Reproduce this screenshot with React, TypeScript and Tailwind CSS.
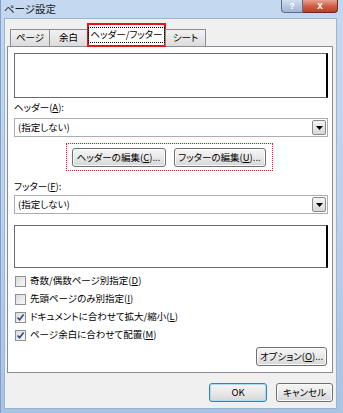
import React from 'react';

const FONT = "font-['Meiryo_UI','Noto_Sans_CJK_JP',sans-serif] [font-feature-settings:'palt']";
const TXT = 'whitespace-nowrap text-[9.5px] leading-none text-black';

const Key: React.FC<{ k: string }> = ({ k }) => (
    <>(<span className="underline underline-offset-1">{k}</span>)</>
);

const WinButton: React.FC<{ width: string; primary?: boolean; children: React.ReactNode }> = ({ width, primary, children }) => (
    <div
        className={`${width} h-[19px] flex items-center justify-center rounded-[3px] border bg-gradient-to-b from-[#f6f6f6] via-[#e9e9e9] to-[#d6d6d6] ${
            primary ? 'border-[#3c7fb1] shadow-[inset_0_0_0_1px_#a9dcf6]' : 'border-[#707070] shadow-[inset_0_0_0_1px_#fbfbfb]'
        }`}
    >
        <span className={TXT}>{children}</span>
    </div>
);

const SelectBox: React.FC<{ value: string }> = ({ value }) => (
    <div className="h-[19px] flex items-center justify-between border border-[#abadb3] bg-white pl-[3px] pr-[1px]">
        <span className={TXT}>{value}</span>
        <div className="w-[14px] h-[15px] flex items-center justify-center rounded-[2px] border border-[#8b8b8b] bg-gradient-to-b from-[#f4f4f4] to-[#d8d8d8]">
            <svg width="7" height="4" viewBox="0 0 7 4">
                <path d="M0 0h7L3.5 4z" fill="#000" />
            </svg>
        </div>
    </div>
);

const Preview: React.FC<{ height: string }> = ({ height }) => (
    <div className={`${height} bg-white border-t border-l border-b border-[#6b6b6b] border-r-2 border-r-black`} />
);

const CheckRow: React.FC<{ checked?: boolean; children: React.ReactNode }> = ({ checked, children }) => (
    <div className="h-[18px] flex items-center gap-[4px] pl-[1px]">
        <div className="w-[11px] h-[11px] flex items-center justify-center border border-[#8e8f8f] bg-gradient-to-br from-[#dcdcdc] to-[#f8f8f8]">
            {checked && (
                <svg width="9" height="9" viewBox="0 0 9 9">
                    <path d="M1.5 4.5 L3.6 6.8 L7.6 1.6" fill="none" stroke="#2d4a7a" strokeWidth="1.6" />
                </svg>
            )}
        </div>
        <span className={TXT}>{children}</span>
    </div>
);

const tabs = [
    { label: 'ページ', w: 'w-[40px]' },
    { label: '余白', w: 'w-[39px]' },
];

export default function App() {
    return (
        <div className={`w-[343px] h-[413px] flex flex-col bg-gradient-to-b from-[#c4d8f0] via-[#bcd2ed] to-[#a9c3e6] border-l border-[#7f9fcc] ${FONT}`}>
            {/* title bar */}
            <div className="h-[18px] flex items-start justify-between shrink-0">
                <span className="pl-[3px] pt-[2px] text-[10.5px] leading-[14px] text-[#1b1b1b] whitespace-nowrap">ページ設定</span>
                <div className="flex mr-[5px]">
                    <div className="w-[22px] h-[13px] flex items-center justify-center rounded-bl-[4px] border border-t-0 border-[#5b6f8c] bg-gradient-to-b from-[#d2deee] to-[#9fb5d3] text-[9px] leading-[10px] font-bold text-white font-['Liberation_Sans',sans-serif]">
                        ?
                    </div>
                    <div className="w-[35px] h-[13px] flex items-center justify-center rounded-br-[4px] border border-t-0 border-l-0 border-[#6e2a21] bg-gradient-to-b from-[#e6a294] via-[#d05e47] to-[#c23d25] text-[10px] leading-[10px] font-bold text-white font-['Liberation_Sans',sans-serif]">
                        x
                    </div>
                </div>
            </div>

            {/* dialog body */}
            <div className="ml-[3px] mr-[6px] mb-[4px] h-[391px] bg-[#f0f0f0] border border-[#9db3cf] pl-[2px] pr-[3px] pt-[4px] flex flex-col">
                {/* tabs */}
                <div className="h-[23px] flex items-end pl-[3px] relative z-10">
                    {tabs.map(t => (
                        <div
                            key={t.label}
                            className={`${t.w} h-[17px] flex items-center justify-center border border-b-0 border-[#898c95] -ml-px first:ml-0 bg-gradient-to-b from-[#f2f2f2] to-[#dcdcdc]`}
                        >
                            <span className={TXT}>{t.label}</span>
                        </div>
                    ))}
                    <div className="w-[79px] h-[24px] -mb-px -ml-px border-2 border-[#e0161c] bg-white flex items-center justify-center">
                        <span className={`px-[2px] py-[2px] border border-dotted border-black ${TXT}`}>
                            ヘッダー/フッター
                        </span>
                    </div>
                    <div className="w-[41px] h-[17px] -ml-px flex items-center justify-center border border-b-0 border-[#898c95] bg-gradient-to-b from-[#f2f2f2] to-[#dcdcdc]">
                        <span className={TXT}>シート</span>
                    </div>
                </div>

                {/* tab panel */}
                <div className="h-[327px] border border-[#898c95] bg-white pl-[6px] pr-[4px] flex flex-col">
                    <div className="mt-[6px]">
                        <Preview height="h-[45px]" />
                    </div>
                    <div className="mt-[3px] h-[14px] flex items-center">
                        <span className={TXT}>ヘッダー<Key k="A" />:</span>
                    </div>
                    <div className="mt-[3px]">
                        <SelectBox value="(指定しない)" />
                    </div>
                    <div className="mt-[6px] flex justify-center pr-[4px]">
                        <div className="flex gap-[8px] border border-dotted border-[#e0161c] pt-[4px] pb-[3px] pl-[5px] pr-[6px]">
                            <WinButton width="w-[94px]">ヘッダーの編集<Key k="C" />...</WinButton>
                            <WinButton width="w-[92px]">フッターの編集<Key k="U" />...</WinButton>
                        </div>
                    </div>
                    <div className="mt-[9px] h-[14px] flex items-center">
                        <span className={TXT}>フッター<Key k="F" />:</span>
                    </div>
                    <div className="mt-[1px]">
                        <SelectBox value="(指定しない)" />
                    </div>
                    <div className="mt-[11px]">
                        <Preview height="h-[43px]" />
                    </div>
                    <div className="mt-[4px] flex flex-col">
                        <CheckRow>奇数/偶数ページ別指定<Key k="D" /></CheckRow>
                        <CheckRow>先頭ページのみ別指定<Key k="I" /></CheckRow>
                        <CheckRow checked>ドキュメントに合わせて拡大/縮小<Key k="L" /></CheckRow>
                        <CheckRow checked>ページ余白に合わせて配置<Key k="M" /></CheckRow>
                    </div>
                    <div className="mt-[3px] flex justify-end pr-[1px]">
                        <WinButton width="w-[71px]">オプション<Key k="O" />...</WinButton>
                    </div>
                </div>

                {/* footer buttons */}
                <div className="mt-[10px] flex justify-end gap-[9px]">
                    <WinButton width="w-[58px]" primary>OK</WinButton>
                    <WinButton width="w-[57px]">キャンセル</WinButton>
                </div>
            </div>
        </div>
    );
}
